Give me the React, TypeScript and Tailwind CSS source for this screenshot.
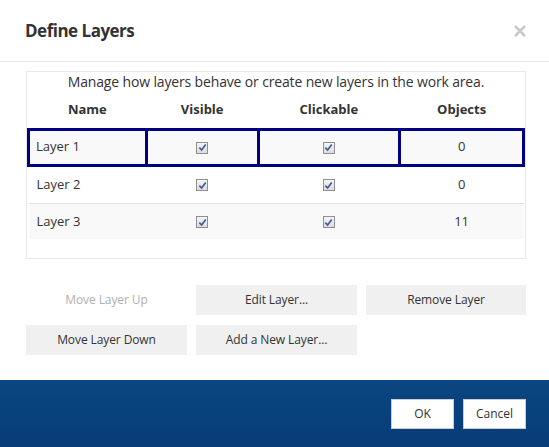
import React from "react"

const font = { fontFamily: "'Open Sans', 'Noto Sans', sans-serif" }

const layers = [
  { name: "Layer 1", objects: 0, selected: true },
  { name: "Layer 2", objects: 0, selected: false },
  { name: "Layer 3", objects: 11, selected: false },
]

function Check() {
  return (
    <span className="inline-flex h-[12px] w-[12px] items-center justify-center border border-[#8f8f8f] bg-gradient-to-b from-[#f4f4f4] to-[#dcdcdc] align-middle">
      <svg viewBox="0 0 10 10" className="h-[9px] w-[9px]">
        <path d="M1.5 5.2 L4 7.8 L8.6 1.6" fill="none" stroke="#3d5a9c" strokeWidth="1.8" />
      </svg>
    </span>
  )
}

function Btn({ label, disabled }: { label: string; disabled?: boolean }) {
  return (
    <button
      type="button"
      className={`h-[30px] w-full text-[12px] tracking-[-0.1px] ${
        disabled ? "bg-transparent text-[#b0b0b0]" : "bg-[#f0f0f0] text-[#333]"
      }`}
    >
      {label}
    </button>
  )
}

export default function App() {
  return (
    <div className="flex h-[447px] w-[549px] flex-col bg-white text-[#333]" style={font}>
      {/* Header */}
      <div className="flex h-[62px] items-center justify-between border-b border-[#e5e5e5] pl-[25px] pr-[22px]">
        <h1 className="text-[17px] font-bold tracking-[-0.5px] text-[#333]">Define Layers</h1>
        <svg viewBox="0 0 14 14" className="h-[14px] w-[14px]">
          <path d="M2 2 L12 12 M12 2 L2 12" stroke="#c9c9c9" strokeWidth="2.6" />
        </svg>
      </div>

      {/* Body */}
      <div className="flex flex-1 flex-col pl-[26px] pr-[23px] pt-[9px]">
        <div className="h-[188px] border border-[#e8e8e8]">
          <p className="pt-[1px] text-center text-[14px] leading-[18px] tracking-[-0.15px]">
            Manage how layers behave or create new layers in the work area.
          </p>
          <table className="w-full border-collapse text-[13px]">
            <colgroup>
              <col className="w-[119px]" />
              <col className="w-[113px]" />
              <col className="w-[143px]" />
              <col className="w-[125px]" />
            </colgroup>
            <thead>
              <tr className="h-[38px] border-b border-[#e0e0e0] font-bold">
                <th className="text-center">Name</th>
                <th className="text-center">Visible</th>
                <th className="text-center">Clickable</th>
                <th className="text-center">Objects</th>
              </tr>
            </thead>
            <tbody>
              {layers.map((l, i) => {
                const cell = l.selected ? "border-[3px] border-[#000080]" : ""
                return (
                  <tr
                    key={l.name}
                    className={`${i === 1 ? "h-[38px]" : "h-[36px]"} ${
                      i % 2 === 0 ? "bg-[#f9f9f9]" : "bg-white"
                    } ${i === 1 ? "border-b border-[#e0e0e0]" : ""}`}
                  >
                    <td className={`${l.selected ? "pl-[6px]" : "pl-[8px]"} ${cell}`}>{l.name}</td>
                    <td className={`text-center ${cell}`}>
                      <Check />
                    </td>
                    <td className={`text-center ${cell}`}>
                      <Check />
                    </td>
                    <td className={`text-center ${cell}`}>{l.objects}</td>
                  </tr>
                )
              })}
            </tbody>
          </table>
        </div>

        <div className="mt-[26px] grid grid-cols-[161px_161px_160px] gap-x-[9px] gap-y-[10px]">
          <Btn label="Move Layer Up" disabled />
          <Btn label="Edit Layer..." />
          <Btn label="Remove Layer" />
          <Btn label="Move Layer Down" />
          <Btn label="Add a New Layer..." />
        </div>
      </div>

      {/* Footer */}
      <div className="flex h-[67px] items-center justify-end gap-[9px] bg-gradient-to-b from-[#0a4681] to-[#073d78] pr-[23px]">
        <button type="button" className="h-[30px] w-[63px] border border-[#cccccc] bg-white text-[12px] text-[#333]">
          OK
        </button>
        <button type="button" className="h-[30px] w-[63px] border border-[#cccccc] bg-white text-[12px] text-[#333]">
          Cancel
        </button>
      </div>
    </div>
  )
}
